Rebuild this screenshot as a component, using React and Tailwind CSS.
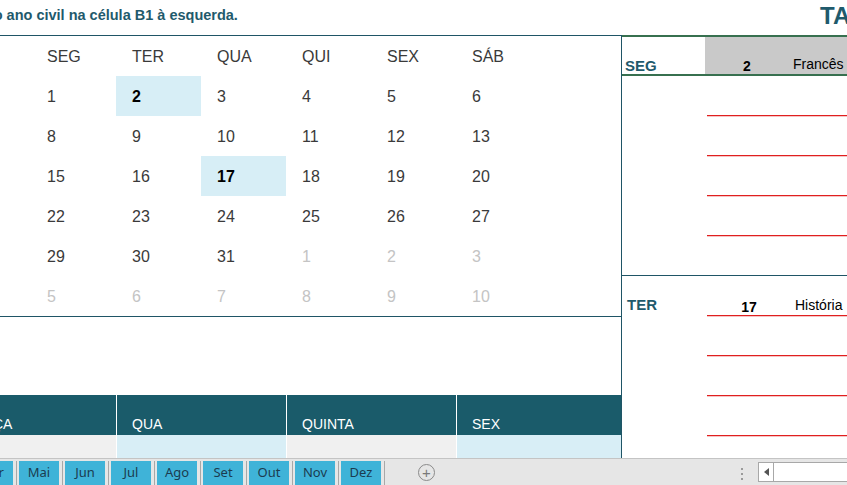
import React from 'react'

const weeks = [
  [['31', 'g'], ['1'], ['2', 'h'], ['3'], ['4'], ['5'], ['6']],
  [['7'], ['8'], ['9'], ['10'], ['11'], ['12'], ['13']],
  [['14'], ['15'], ['16'], ['17', 'h'], ['18'], ['19'], ['20']],
  [['21'], ['22'], ['23'], ['24'], ['25'], ['26'], ['27']],
  [['28'], ['29'], ['30'], ['31'], ['1', 'g'], ['2', 'g'], ['3', 'g']],
  [['4', 'g'], ['5', 'g'], ['6', 'g'], ['7', 'g'], ['8', 'g'], ['9', 'g'], ['10', 'g']],
]

const dayNames = ['DOM', 'SEG', 'TER', 'QUA', 'QUI', 'SEX', 'SÁB']
const months = ['Abr', 'Mai', 'Jun', 'Jul', 'Ago', 'Set', 'Out', 'Nov', 'Dez']

function Calendar() {
  return (
    <div className="-ml-[54px] grid grid-cols-[repeat(7,85px)] auto-rows-[40px] text-[16px] text-[#3a3a3a]">
      {dayNames.map((d) => (
        <div key={d} className="flex items-center pl-4 pt-[2px]">{d}</div>
      ))}
      {weeks.flat().map(([n, k], i) => (
        <div
          key={i}
          className={
            k === 'h'
              ? 'flex items-center pl-4 pt-[2px] bg-[#d7eef6] font-bold text-black'
              : k === 'g'
              ? 'flex items-center pl-4 pt-[2px] text-[#c4c4c4]'
              : 'flex items-center pl-4 pt-[2px]'
          }
        >
          {n}
        </div>
      ))}
    </div>
  )
}

function WeekBand() {
  const cols = ['TERÇA', 'QUA', 'QUINTA', 'SEX']
  return (
    <div className="-ml-[54px] flex">
      {cols.map((c, i) => (
        <div key={c} className="w-[170px] shrink-0 flex flex-col border-l border-white first:border-l-0">
          <div className={(i === 0 ? 'pl-[19px] ' : 'pl-[15px] ') + 'h-10 bg-[#1a5b6a] text-white text-[14px] flex items-end'}>
            {c}
          </div>
          <div className={i % 2 ? 'h-[23px] bg-[#d8eef6]' : 'h-[23px] bg-[#f0f0f0]'} />
        </div>
      ))}
    </div>
  )
}

// linha vermelha por baixo de cada tarefa
function TaskRow({ label, num, text }) {
  return (
    <div className="h-10 flex">
      <div className="w-[85px] shrink-0 flex items-end pl-[5px] text-[15px] font-bold text-[#1f5a6c]">{label}</div>
      <div className="flex-1 flex flex-col">
        <div className="flex-1 flex items-end text-[14px] text-black">
          <div className="w-[84px] text-center font-bold translate-y-[3px]">{num}</div>
          <div className="pl-[4px] whitespace-nowrap translate-y-[1px]">{text}</div>
        </div>
        <div className="h-px bg-[#e01f1f]" />
        <div className="h-px -mb-px bg-[#f6c4c4]" />
      </div>
    </div>
  )
}

export default function App() {
  return (
    <div className="w-[847px] h-[485px] overflow-hidden bg-white flex flex-col font-['Liberation_Sans',Arial,sans-serif]">
      <div className="h-[35px] shrink-0 flex items-center pb-1 overflow-hidden">
        <div className="w-[820px] shrink-0 overflow-hidden">
          <div className="-ml-[49px] whitespace-nowrap text-[14.5px] font-bold text-[#1f5a6c]">
            Insira o ano civil na célula B1 à esquerda.
          </div>
        </div>
        <div className="whitespace-nowrap text-[24px] font-bold text-[#1f5a6c]">TAREFAS</div>
      </div>

      <div className="h-[423px] shrink-0 flex">
        <div className="w-[622px] shrink-0 border-t border-r border-[#1f5566] overflow-hidden flex flex-col">
          <div className="border-b border-[#1f5566]">
            <Calendar />
          </div>
          <div className="h-[78px]" />
          <WeekBand />
        </div>

        <div className="flex-1 flex flex-col overflow-hidden">
          <div className="h-[41px] -ml-[2px] border-2 border-r-0 border-[#37704f] flex">
            <div className="w-[83px] shrink-0 flex items-end pl-[3px] text-[15px] font-bold text-[#1f5a6c] translate-y-[3px]">
              SEG
            </div>
            <div className="flex-1 bg-[#c9c9c9] flex items-end text-[14px] text-black">
              <div className="w-[84px] text-center font-bold translate-y-[3px]">2</div>
              <div className="pl-[4px] whitespace-nowrap translate-y-[1px]">Francês</div>
            </div>
          </div>
          <TaskRow />
          <TaskRow />
          <TaskRow />
          <TaskRow />
          <div className="h-10 border-b border-[#1f5566]" />
          <TaskRow label="TER" num="17" text="História" />
          <TaskRow />
          <TaskRow />
          <TaskRow />
        </div>
      </div>

      <div className="flex-1 bg-[#e6e6e6] border-t border-[#c4c4c4] flex items-end overflow-hidden">
        <div className="flex items-end h-[24px] -ml-[27px] shrink-0">
          {months.map((m) => (
            <div key={m} className="h-full flex">
              <div className="w-[40px] h-full bg-[#3fb3d8] flex items-center justify-center text-[13px] text-[#1b3c50] font-['Noto_Sans',sans-serif]">
                {m}
              </div>
              <div className="w-[6px] h-full flex justify-center">
                <div className="w-px h-full bg-[#a8a8a8]" />
              </div>
            </div>
          ))}
        </div>
        <div className="ml-[31px] mb-[4px] w-[17px] h-[17px] shrink-0 rounded-full border border-[#8a8a8a] flex items-center justify-center text-[#7a7a7a] text-[15px] leading-none">
          +
        </div>
        <div className="ml-[306px] mb-[5px] shrink-0 flex flex-col gap-[3px]">
          <div className="w-[2px] h-[2px] bg-[#9a9a9a]" />
          <div className="w-[2px] h-[2px] bg-[#9a9a9a]" />
          <div className="w-[2px] h-[2px] bg-[#9a9a9a]" />
        </div>
        <div className="ml-[15px] mb-[3px] h-[20px] flex-1 border border-r-0 border-[#a8a8a8] bg-white flex">
          <div className="w-[15px] border-r border-[#a8a8a8] flex items-center justify-center">
            <svg width="5" height="8" viewBox="0 0 5 8">
              <path d="M5 0 L0 4 L5 8 Z" fill="#555" />
            </svg>
          </div>
        </div>
      </div>
    </div>
  )
}
